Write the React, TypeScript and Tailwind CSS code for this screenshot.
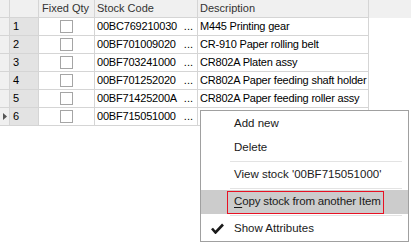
const rows = [
  {n: '1', code: '00BC769210030', desc: 'M445 Printing gear'},
  {n: '2', code: '00BF701009020', desc: 'CR-910 Paper rolling belt'},
  {n: '3', code: '00BF703241000', desc: 'CR802A Platen assy'},
  {n: '4', code: '00BF701252020', desc: 'CR802A Paper feeding shaft holder'},
  {n: '5', code: '00BF71425200A', desc: 'CR802A Paper feeding roller assy'},
  {n: '6', code: '00BF715051000', desc: ''},
];

function CheckBox() {
  return <div className="h-[13px] w-[13px] border border-[#a5a5a5] bg-white" />;
}

function Grid() {
  return (
    <div className="flex flex-col whitespace-nowrap text-[11px] text-black">
      <div className="flex h-[18px] bg-[#f0f0f0]">
        <div className="w-[10px] border-r border-b border-[#d5d5d5]" />
        <div className="w-[29px] border-r border-b border-[#d5d5d5]" />
        <div className="w-[56px] border-r border-b border-[#d5d5d5] pl-[3px] leading-[17px] text-[#333]">Fixed Qty</div>
        <div className="w-[103px] border-r border-b border-[#d5d5d5] pl-[2px] leading-[17px] text-[#333]">Stock Code</div>
        <div className="w-[171px] border-r border-b border-[#d5d5d5] pl-[2px] leading-[17px] text-[#333]">Description</div>
      </div>
      {rows.map(r => (
        <div key={r.n} className="flex h-[18px]">
          <div className="flex w-[10px] items-center justify-center border-r border-b border-[#d5d5d5] bg-[#f0f0f0]">
            {r.n === '6' && (
              <svg width="4" height="7" viewBox="0 0 4 7">
                <path d="M0 0 L4 3.5 L0 7 Z" fill="#555" />
              </svg>
            )}
          </div>
          <div className="w-[29px] border-r border-b border-[#d5d5d5] bg-[#e3e3e3] pl-[3px] leading-[17px]">{r.n}</div>
          <div className="flex w-[56px] items-center justify-center border-r border-b border-[#d5d5d5] bg-white">
            <CheckBox />
          </div>
          <div className="flex w-[103px] items-center justify-between overflow-hidden border-r border-b border-[#d5d5d5] bg-white pl-[2px] pr-[4px] leading-[17px]">
            <span className="tracking-[-0.2px]">{r.code}</span>
            <span>...</span>
          </div>
          <div className="w-[171px] overflow-hidden border-r border-b border-[#d5d5d5] bg-white pl-[2px] leading-[17px] tracking-[-0.2px]">
            {r.desc}
          </div>
        </div>
      ))}
    </div>
  );
}

function Separator() {
  return <div className="my-[1px] ml-[29px] mr-[6px] h-px bg-[#e3e3e3]" />;
}

function Menu() {
  return (
    <div className="absolute left-[200px] top-[110px] flex w-[209px] flex-col whitespace-nowrap border border-[#a0a0a0] bg-white py-[1px] text-[11.5px] text-[#1a1a1a]">
      <div className="flex h-[24px] items-center pl-[33px]">Add new</div>
      <div className="flex h-[24px] items-center pl-[33px]">Delete</div>
      <Separator />
      <div className="flex h-[24px] items-center pl-[33px]">View stock '00BF715051000'</div>
      <Separator />
      <div className="flex h-[24px] items-center bg-[#cccccc] pl-[26px]">
        <div className="flex h-[23px] w-[157px] items-center border border-[#e81123] pl-[6px] tracking-[-0.15px]">
          <span className="underline underline-offset-2">C</span>opy stock from another Item
        </div>
      </div>
      <Separator />
      <div className="flex h-[23px] items-center">
        <div className="flex w-[33px] justify-center">
          <svg width="13" height="11" viewBox="0 0 13 11">
            <path d="M1 5.5 L4.5 9.5 L12 1.5" fill="none" stroke="#1a1a1a" strokeWidth="2.6" />
          </svg>
        </div>
        Show Attributes
      </div>
    </div>
  );
}

export default function App() {
  return (
    <div className="relative h-[243px] w-[411px] overflow-hidden bg-white font-['Liberation_Sans',Arial,sans-serif]">
      <Grid />
      <Menu />
    </div>
  );
}
